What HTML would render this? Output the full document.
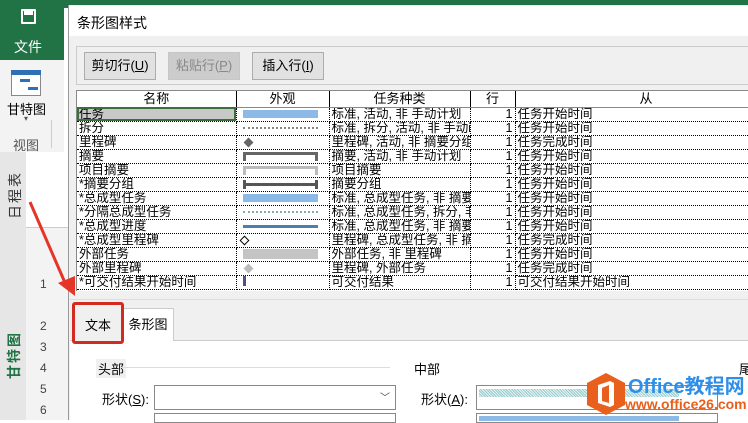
<!DOCTYPE html>
<html><head><meta charset="utf-8"><style>
*{margin:0;padding:0;box-sizing:border-box}
body{width:748px;height:420px;overflow:hidden;position:relative;background:#fff;font-family:"Liberation Sans","Noto Sans CJK SC",sans-serif;font-size:13px;color:#000}
.a{position:absolute}
.btn{position:absolute;top:52px;height:28px;border:1px solid #adadad;background:#e1e1e1;text-align:center;line-height:26px;font-size:13px}
table{border-collapse:collapse;font-size:12.5px;table-layout:fixed}
td{height:14px;line-height:13px;border-right:1px dotted #000;border-bottom:1px dotted #000;padding:0 2px;white-space:nowrap;overflow:hidden}
th{height:16px;font-weight:normal;border-right:1px solid #000;border-bottom:1px solid #888;background:#fff;line-height:15px;font-size:13px}
.r{text-align:right}
.bar{display:inline-block;height:8px;width:75px;vertical-align:middle;margin-left:4px}
.rot{width:60px;height:18px;line-height:18px;text-align:center;transform:rotate(-90deg);letter-spacing:2px}
</style></head><body>
<div class="a" style="left:0;top:0;width:748px;height:8px;background:#217346"></div>
<div class="a" style="left:0;top:0;width:64px;height:60px;background:#217346"></div>
<div class="a" style="left:21px;top:9px;width:15px;height:15px;border:2px solid #fff;border-radius:1px"></div>
<div class="a" style="left:24px;top:11px;width:9px;height:4px;background:#fff"></div>
<div class="a" style="left:14px;top:37px;color:#fff;font-size:14px">文件</div>
<div class="a" style="left:0;top:60px;width:64px;height:92px;background:#f3f3f3"></div>
<div class="a" style="left:11px;top:70px;width:30px;height:26px;border:1px solid #888;background:#fff"></div>
<div class="a" style="left:11px;top:70px;width:30px;height:5px;background:#2e6fb5"></div>
<div class="a" style="left:20px;top:79px;width:10px;height:3px;background:#2e6fb5"></div>
<div class="a" style="left:28px;top:87px;width:10px;height:3px;background:#2e6fb5"></div>
<div class="a" style="left:7px;top:99px;font-size:13px">甘特图</div>
<div class="a" style="left:24px;top:114px;font-size:8px;color:#555">▾</div>
<div class="a" style="left:13px;top:135px;color:#555">视图</div>
<div class="a" style="left:51px;top:120px;width:1px;height:28px;background:#ccc"></div>
<div class="a" style="left:0;top:152px;width:26px;height:268px;background:#e6e6e6"></div>
<div class="a rot" style="left:-15px;top:186px;font-size:14px;color:#333">日程表</div>
<div class="a" style="left:26px;top:152px;width:42px;height:75px;background:#fff"></div>
<div class="a" style="left:26px;top:227px;width:42px;height:193px;background:#f3f3f3;border-top:1px solid #ccc"></div>
<div class="a rot" style="left:-16px;top:346px;font-size:14px;color:#217346;font-weight:bold">甘特图</div>
<div class="a" style="left:40px;top:274px;font-size:12px;color:#444;line-height:21px">1<br><br>2<br>3<br>4<br>5<br>6</div>
<div class="a" style="left:68px;top:5px;width:680px;height:415px;background:#f0f0f0;border-left:1px solid #999"></div>
<div class="a" style="left:69px;top:6px;width:679px;height:30px;background:#fff"></div>
<div class="a" style="left:77px;top:13px;font-size:14px">条形图样式</div>
<div class="a" style="left:76px;top:46px;width:672px;height:39px;border:1px solid #ccc;border-right:none"></div>
<div class="btn" style="left:84px;width:72px">剪切行(<u>U</u>)</div>
<div class="btn" style="left:168px;width:72px;background:#ccc;border-color:#c6c6c6;color:#888">粘贴行(<u>P</u>)</div>
<div class="btn" style="left:252px;width:72px">插入行(<u>I</u>)</div>
<div class="a" style="left:76px;top:90px;width:672px;height:201px;background:#fff;border-left:1px solid #888;border-top:1px solid #888;overflow:hidden">
<table style="width:700px">
<colgroup><col style="width:159px"><col style="width:93px"><col style="width:141px"><col style="width:45px"><col style="width:262px"></colgroup>
<tr><th>名称</th><th>外观</th><th>任务种类</th><th>行</th><th>从</th></tr>
<tr><td style="background:#c8c8c8;outline:2px solid #3a6e3a;outline-offset:-2px">任务</td><td><span class="bar" style="background:#8db9e6"></span></td><td>标准, 活动, 非 手动计划</td><td class="r">1</td><td>任务开始时间</td></tr>
<tr><td>拆分</td><td><span class="bar" style="height:2px;border-top:2px dotted #888"></span></td><td>标准, 拆分, 活动, 非 手动i</td><td class="r">1</td><td>任务开始时间</td></tr>
<tr><td>里程碑</td><td><span style="display:inline-block;width:7px;height:7px;background:#666;transform:rotate(45deg);margin-left:6px"></span></td><td>里程碑, 活动, 非 摘要分组</td><td class="r">1</td><td>任务完成时间</td></tr>
<tr><td>摘要</td><td><span class="bar" style="border:3px solid #666;border-bottom:none;height:9px;background:#fff"></span></td><td>摘要, 活动, 非 手动计划</td><td class="r">1</td><td>任务开始时间</td></tr>
<tr><td>项目摘要</td><td><span class="bar" style="border:3px solid #bbb;border-bottom:none;height:9px"></span></td><td>项目摘要</td><td class="r">1</td><td>任务开始时间</td></tr>
<tr><td>*摘要分组</td><td><span class="bar" style="height:9px;border-left:3px solid #555;border-right:3px solid #555;background:linear-gradient(#fff 3px,#555 3px,#555 6px,#fff 6px)"></span></td><td>摘要分组</td><td class="r">1</td><td>任务开始时间</td></tr>
<tr><td>*总成型任务</td><td><span class="bar" style="background:#8db9e6"></span></td><td>标准, 总成型任务, 非 摘要</td><td class="r">1</td><td>任务开始时间</td></tr>
<tr><td>*分隔总成型任务</td><td><span class="bar" style="height:2px;border-top:2px dotted #8aa"></span></td><td>标准, 总成型任务, 拆分, 非</td><td class="r">1</td><td>任务开始时间</td></tr>
<tr><td>*总成型进度</td><td><span class="bar" style="height:3px;background:#4a7fb0"></span></td><td>标准, 总成型任务, 非 摘要</td><td class="r">1</td><td>任务开始时间</td></tr>
<tr><td>*总成型里程碑</td><td><span style="display:inline-block;width:7px;height:7px;border:1px solid #000;transform:rotate(45deg);margin-left:2px"></span></td><td>里程碑, 总成型任务, 非 摘</td><td class="r">1</td><td>任务完成时间</td></tr>
<tr><td>外部任务</td><td><span class="bar" style="background:#c4c4c4;height:10px"></span></td><td>外部任务, 非 里程碑</td><td class="r">1</td><td>任务开始时间</td></tr>
<tr><td>外部里程碑</td><td><span style="display:inline-block;width:7px;height:7px;background:#bbb;transform:rotate(45deg);margin-left:6px"></span></td><td>里程碑, 外部任务</td><td class="r">1</td><td>任务完成时间</td></tr>
<tr><td>*可交付结果开始时间</td><td><span style="display:inline-block;width:3px;height:10px;background:#5a4a8a;margin-left:4px"></span></td><td>可交付结果</td><td class="r">1</td><td>可交付结果开始时间</td></tr>
</table></div>
<div class="a" style="left:70px;top:299px;width:678px;height:1px;background:#ddd"></div>
<div class="a" style="left:70px;top:340px;width:678px;height:80px;background:#fff;border-top:1px solid #ccc"></div>
<div class="a" style="left:74px;top:312px;width:48px;height:29px;background:#f0f0f0;text-align:center;line-height:28px">文本</div>
<div class="a" style="left:122px;top:308px;width:52px;height:33px;background:#fff;border:1px solid #ccc;border-bottom:none;text-align:center;line-height:32px">条形图</div>
<div class="a" style="left:72px;top:302px;width:52px;height:42px;border:3px solid #d42a20;border-radius:3px"></div>
<div class="a" style="left:96px;top:359px;background:#f0f0f0;padding:0 2px">头部</div>
<div class="a" style="left:120px;top:367px;width:270px;height:1px;background:#ddd"></div>
<div class="a" style="left:414px;top:359px">中部</div>
<div class="a" style="left:739px;top:359px">尾</div>
<div class="a" style="left:102px;top:389px">形状(<u>S</u>):</div>
<div class="a" style="left:154px;top:385px;width:242px;height:25px;border:1px solid #888;background:#fff"></div>
<div class="a" style="left:380px;top:389px;font-size:10px;color:#444">﹀</div>
<div class="a" style="left:154px;top:413px;width:242px;height:10px;border:1px solid #888"></div>
<div class="a" style="left:421px;top:389px">形状(<u>A</u>):</div>
<div class="a" style="left:476px;top:385px;width:242px;height:25px;border:1px solid #888;background:#fff"></div>
<div class="a" style="left:479px;top:389px;width:200px;height:8px;background:repeating-linear-gradient(45deg,#9cc 0 1px,#e6f2f2 1px 2px)"></div>
<div class="a" style="left:476px;top:413px;width:242px;height:10px;border:1px solid #888"></div>
<div class="a" style="left:479px;top:416px;width:200px;height:5px;background:#8db9e6"></div>
<svg class="a" style="left:584px;top:372px" width="44" height="44" viewBox="0 0 44 44"><polygon points="22,1 41,11 41,33 22,43 3,33 3,11" fill="#e8601c"/><path d="M14 13 L26 9 L30 11 L30 33 L26 35 L14 31 Z M18 16 L18 29 L25 31 L25 13 Z" fill="#fff" fill-rule="evenodd"/></svg>
<div class="a" style="left:628px;top:370px;font-size:20px;font-weight:bold;color:#2f8fe8;white-space:nowrap">Office教程网</div>
<div class="a" style="left:625px;top:396px;font-size:14px;font-weight:bold;color:#e8601c;white-space:nowrap">www.office26.com</div>
<svg class="a" style="left:0;top:0" width="748" height="420"><line x1="30" y1="202" x2="66" y2="285" stroke="#e53528" stroke-width="3"/><polygon points="58,283 75,296 75,276" fill="#e53528"/></svg>
</body></html>
